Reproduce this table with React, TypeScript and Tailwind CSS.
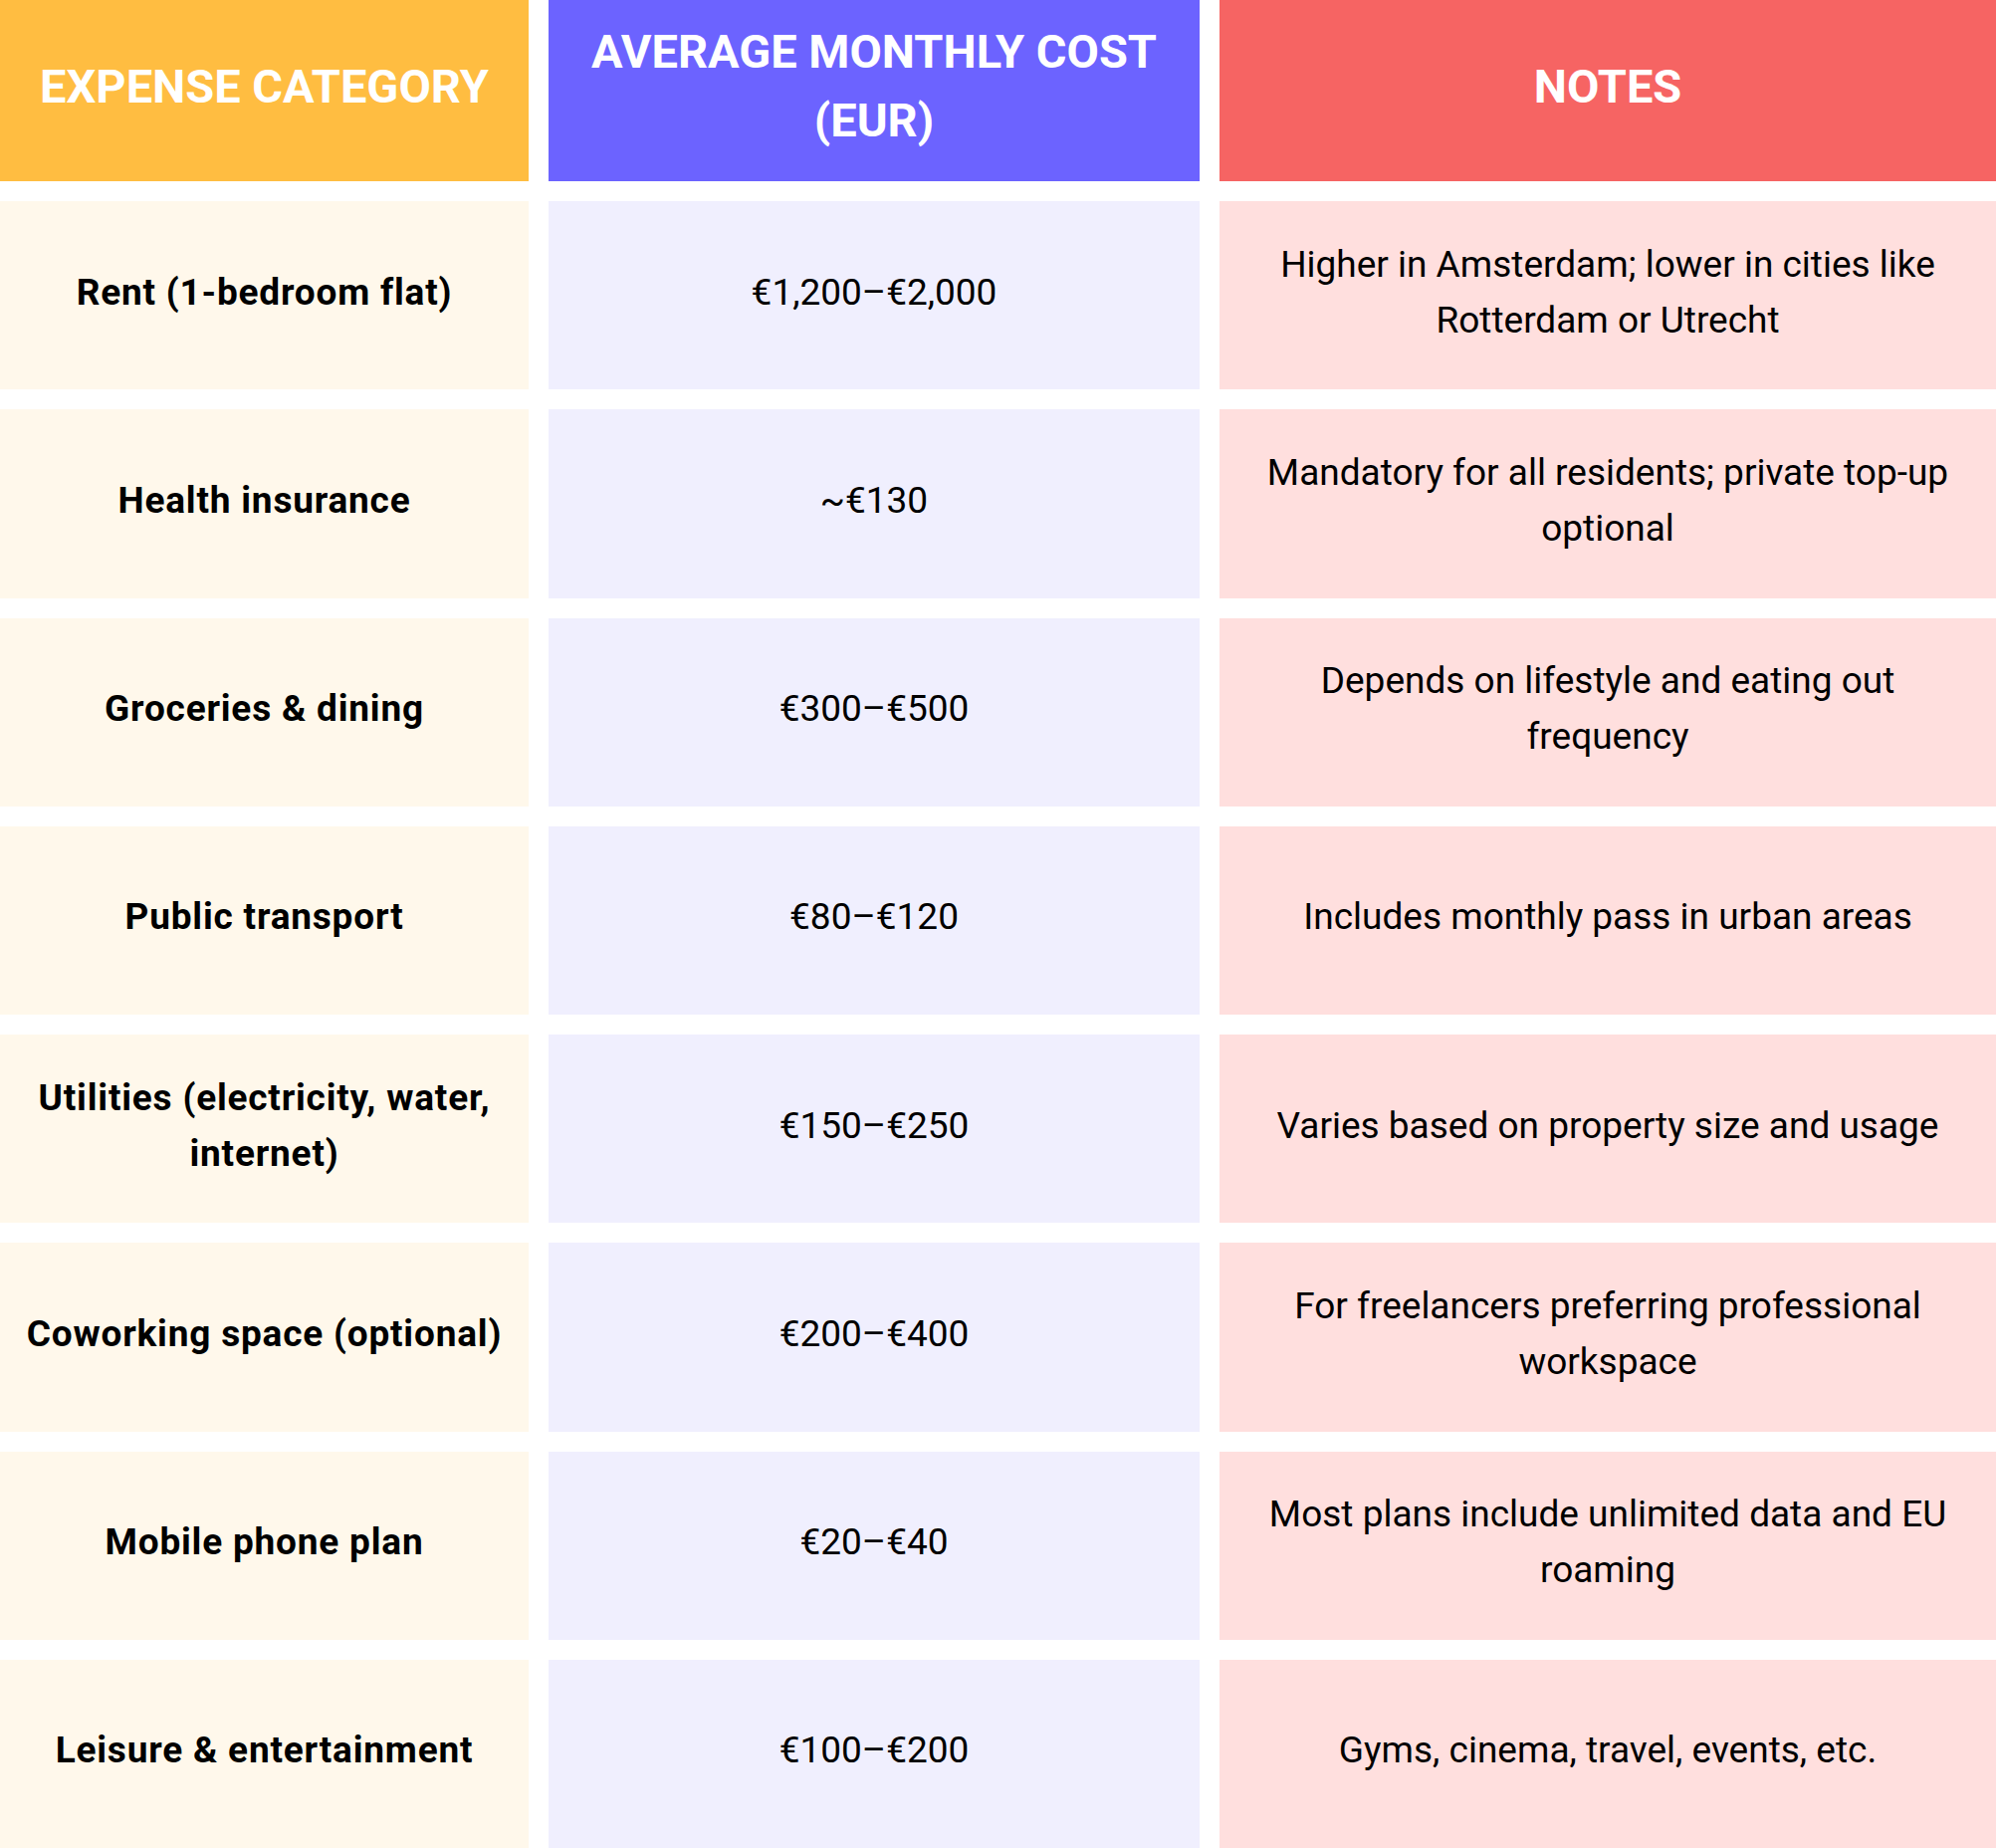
const rows: { category: string[]; cost: string; notes: string[] }[] = [
  {
    category: ["Rent (1-bedroom flat)"],
    cost: "€1,200–€2,000",
    notes: ["Higher in Amsterdam; lower in cities like", "Rotterdam or Utrecht"],
  },
  {
    category: ["Health insurance"],
    cost: "~€130",
    notes: ["Mandatory for all residents; private top-up", "optional"],
  },
  {
    category: ["Groceries & dining"],
    cost: "€300–€500",
    notes: ["Depends on lifestyle and eating out", "frequency"],
  },
  {
    category: ["Public transport"],
    cost: "€80–€120",
    notes: ["Includes monthly pass in urban areas"],
  },
  {
    category: ["Utilities (electricity, water,", "internet)"],
    cost: "€150–€250",
    notes: ["Varies based on property size and usage"],
  },
  {
    category: ["Coworking space (optional)"],
    cost: "€200–€400",
    notes: ["For freelancers preferring professional", "workspace"],
  },
  {
    category: ["Mobile phone plan"],
    cost: "€20–€40",
    notes: ["Most plans include unlimited data and EU", "roaming"],
  },
  {
    category: ["Leisure & entertainment"],
    cost: "€100–€200",
    notes: ["Gyms, cinema, travel, events, etc."],
  },
];

function Lines({ lines }: { lines: string[] }) {
  return (
    <>
      {lines.map((l, i) => (
        <span key={i} className="block whitespace-nowrap">
          {l}
        </span>
      ))}
    </>
  );
}

export default function App() {
  return (
    <div
      className="w-[2005px] h-[1856px] bg-white grid grid-cols-[531px_654px_780px] grid-rows-[182px_repeat(8,1fr)] gap-[20px] text-black"
      style={{ fontFamily: "Roboto, 'Noto Sans', sans-serif" }}
    >
      {/* header */}
      <div className="bg-[#FFBD41] flex items-center justify-center text-center text-white font-bold text-[47px] leading-[69px] pb-[10px]">
        EXPENSE CATEGORY
      </div>
      <div className="bg-[#6C63FF] flex items-center justify-center text-center text-white font-bold text-[47px] leading-[69px] pb-[10px]">
        <div>
          <Lines lines={["AVERAGE MONTHLY COST", "(EUR)"]} />
        </div>
      </div>
      <div className="bg-[#F66463] flex items-center justify-center text-center text-white font-bold text-[47px] leading-[69px] pb-[10px]">
        NOTES
      </div>

      {rows.map((r, i) => (
        <div key={i} className="contents">
          <div className="bg-[#FFF8EB] flex items-center justify-center text-center font-bold text-[37px] tracking-[0.8px] leading-[56px] px-[10px] pb-[6px]">
            <div>
              <Lines lines={r.category} />
            </div>
          </div>
          <div className="bg-[#F0EFFE] flex items-center justify-center text-center text-[37px] leading-[56px] pb-[6px]">
            {r.cost}
          </div>
          <div className="bg-[#FFDFDE] flex items-center justify-center text-center text-[37px] leading-[56px] px-[10px] pb-[6px]">
            <div>
              <Lines lines={r.notes} />
            </div>
          </div>
        </div>
      ))}
    </div>
  );
}
